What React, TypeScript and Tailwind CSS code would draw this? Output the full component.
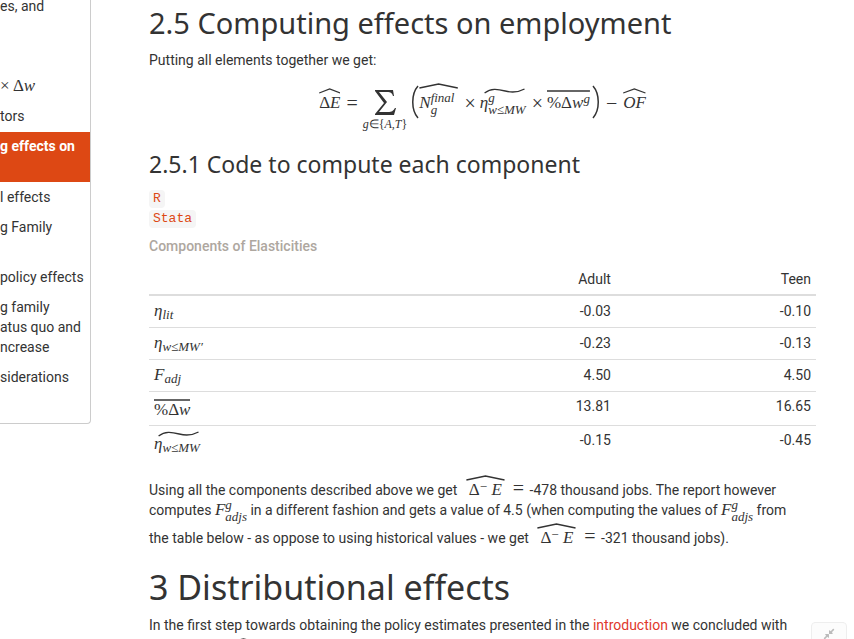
import type { ReactNode } from "react";
import { FaCompressAlt } from "react-icons/fa";

const math = "font-['Liberation_Serif',serif] text-[17px]";
const heading = "font-['Noto_Sans',sans-serif]";

function V({ children }: { children: ReactNode }) {
  return <i>{children}</i>;
}

function Op({ children }: { children: ReactNode }) {
  return <span className="text-[20px]">{children}</span>;
}

const accentShapes = {
  hat: "M1 5 L50 1 L99 5",
  tilde: "M10 5 C24 0 38 1 55 3 S85 4 97 1",
  bar: "M0 3 H100",
};

function Accent({ kind, children }: { kind: keyof typeof accentShapes; children: ReactNode }) {
  return (
    <span className="relative inline-block pt-2">
      <svg
        className="absolute left-0 top-[3px] h-[6px] w-full"
        viewBox="0 0 100 6"
        preserveAspectRatio="none"
        fill="none"
        stroke="#333"
        aria-hidden="true"
      >
        <path d={accentShapes[kind]} vectorEffect="non-scaling-stroke" strokeWidth="1.3" />
      </svg>
      {children}
    </span>
  );
}

function Sub({ children }: { children: ReactNode }) {
  return <sub className="bottom-[-3px] text-[13px] italic">{children}</sub>;
}

function Scripts({ sup, sub }: { sup: string; sub: string }) {
  return (
    <span className="-my-1 inline-flex flex-col align-middle text-[13px] italic leading-[12px]">
      <span>{sup}</span>
      <span>{sub}</span>
    </span>
  );
}

function Paren({ flip = false }: { flip?: boolean }) {
  return (
    <svg className="h-[34px] w-[8px]" viewBox="0 0 8 34" fill="none" stroke="#333" strokeWidth="1.5" aria-hidden="true">
      <path d={flip ? "M1 1 C8 9 8 25 1 33" : "M7 1 C0 9 0 25 7 33"} />
    </svg>
  );
}

function DeltaE() {
  return (
    <span className={`${math} ml-[5px] mr-[2px]`}>
      <Accent kind="hat">
        <span className="px-[3px]">
          Δ<sup className="top-[-4px] text-[13px]">−</sup> <V>E</V>
        </span>
      </Accent>
      <span className="ml-2"><Op>=</Op></span>
    </span>
  );
}

function Fadjs() {
  return (
    <span className={math}>
      <V>F</V>
      <Scripts sup="g" sub="adjs" />
    </span>
  );
}

const navItems: { lines: ReactNode[]; active?: boolean }[] = [
  { lines: [<span className={math}>× Δ<V>w</V></span>] },
  { lines: ["tors"] },
  { lines: ["g effects on", "\u00a0"], active: true },
  { lines: ["l effects"] },
  { lines: ["g Family", "\u00a0"] },
  { lines: ["policy effects"] },
  { lines: ["g family", "atus quo and", "ncrease"] },
  { lines: ["siderations", "\u00a0"] },
];

const rows: { label: ReactNode; adult: string; teen: string; tall?: boolean }[] = [
  { label: <><V>η</V><Sub>lit</Sub></>, adult: "-0.03", teen: "-0.10" },
  { label: <><V>η</V><Sub>w≤MW′</Sub></>, adult: "-0.23", teen: "-0.13" },
  { label: <><V>F</V><Sub>adj</Sub></>, adult: "4.50", teen: "4.50" },
  { label: <Accent kind="bar">%Δ<V>w</V></Accent>, adult: "13.81", teen: "16.65", tall: true },
  { label: <Accent kind="tilde"><V>η</V><Sub>w≤MW</Sub></Accent>, adult: "-0.15", teen: "-0.45", tall: true },
];

export default function App() {
  return (
    <div className="flex h-screen items-start overflow-hidden bg-white font-['Roboto',sans-serif] text-[14px] leading-5 text-[#333]">
      <nav className="w-[91px] shrink-0 overflow-hidden whitespace-nowrap rounded-br border-b border-r border-[#ccc] pb-[11px]">
        <a href="#values" className="-mt-1 block h-[75px]">
          es, and
        </a>
        {navItems.map((item, i) => (
          <a
            key={i}
            href="#section"
            className={item.active ? "mt-px block bg-[#dd4814] pb-[6px] pt-1 font-bold text-white" : "block py-[5px]"}
          >
            {item.lines.map((line, j) => (
              <span key={j} className="block h-5">
                {line}
              </span>
            ))}
          </a>
        ))}
      </nav>

      <main className="ml-[58px] mr-[38px] min-w-0 flex-1">
        <h2 className={`${heading} pt-1 text-[29px] leading-[38px]`}>2.5 Computing effects on employment</h2>
        <p className="mt-2">Putting all elements together we get:</p>

        <div className={`${math} mt-[10px] flex h-[56px] items-start justify-center whitespace-nowrap`}>
          <span className="mt-[5px]"><Accent kind="hat">Δ<V>E</V></Accent></span>
          <span className="ml-[6px] mt-[13px]"><Op>=</Op></span>
          <span className="ml-[5px] mt-[10px] flex flex-col items-center">
            <svg className="h-[26px] w-[22px]" viewBox="0 0 22 26" fill="#333" aria-hidden="true">
              <path d="M1 0 H19 L20 6 H19 C18 3 17 2 13 2 H5 L13 12 L5 22 H14 C18 22 19 21 21 18 H22 L20 25 H1 V24 L10 13 L1 1Z" />
            </svg>
            <span className="text-[12px] leading-[16px]"><V>g</V>∈{"{"}<V>A,T</V>{"}"}</span>
          </span>
          <span className="ml-1 mt-[5px]"><Paren /></span>
          <span><Accent kind="hat"><span className="block pr-1 pt-[5px]"><V>N</V><Scripts sup="final" sub="g" /></span></Accent></span>
          <span className="ml-[6px] mt-[13px]"><Op>×</Op></span>
          <span className="ml-1 mt-[5px]"><Accent kind="tilde"><V>η</V><Scripts sup="g" sub="w≤MW" /></Accent></span>
          <span className="ml-[6px] mt-[13px]"><Op>×</Op></span>
          <span className="ml-1 mt-[5px]">
            <Accent kind="bar">%Δ<V>w</V><sup className="top-[-5px] text-[13px] italic">g</sup></Accent>
          </span>
          <span className="ml-[2px] mt-[5px]"><Paren flip /></span>
          <span className="ml-[6px] mt-[13px]"><Op>−</Op></span>
          <span className="ml-[6px] mt-[5px]"><Accent kind="hat"><V>OF</V></Accent></span>
        </div>

        <h3 className={`${heading} mt-[13px] text-[23px] leading-[30px]`}>2.5.1 Code to compute each component</h3>
        <div className="mt-[10px] font-['Liberation_Mono',monospace] text-[13px] text-[#dd4814]">
          <div className="flex h-5 items-center"><code className="rounded bg-[#f5f5f5] px-1 font-[inherit] leading-[18px]">R</code></div>
          <div className="flex h-5 items-center"><code className="rounded bg-[#f5f5f5] px-1 font-[inherit] leading-[18px]">Stata</code></div>
        </div>

        <table className="mt-[7px] w-full table-fixed border-collapse">
          <caption className="pb-2 text-left font-medium text-[#aea79f]">Components of Elasticities</caption>
          <thead>
            <tr className="h-[31px] border-b-2 border-[#ddd]">
              <th className="w-[40%]" aria-label="Component" />
              <th className="w-[30%] px-[5px] py-0 text-right font-normal">Adult</th>
              <th className="w-[30%] px-[5px] py-0 text-right font-normal">Teen</th>
            </tr>
          </thead>
          <tbody>
            {rows.map((r, i) => (
              <tr key={i} className={`${r.tall ? "h-[34px] *:pb-1" : "h-8"} border-[#ddd] [&:not(:last-child)]:border-b`}>
                <th scope="row" className={`${math} px-[5px] pt-0 text-left font-normal leading-4`}>{r.label}</th>
                <td className="px-[5px] pt-0 text-right">{r.adult}</td>
                <td className="px-[5px] pt-0 text-right">{r.teen}</td>
              </tr>
            ))}
          </tbody>
        </table>

        <p className="mt-[13px] whitespace-nowrap">
          Using all the components described above we get <DeltaE /> -478 thousand jobs. The report however
          <br />
          computes <Fadjs /> in a different fashion and gets a value of 4.5 (when computing the values of <Fadjs /> from
          <br />
          the table below - as oppose to using historical values - we get <DeltaE /> -321 thousand jobs).
        </p>

        <h1 className={`${heading} mt-[17px] text-[34px] leading-[44px]`}>3 Distributional effects</h1>
        <p className="mt-[6px] whitespace-nowrap">
          In the first step towards obtaining the policy estimates presented in the{" "}
          <a href="#introduction" className="text-[#df382c]">introduction</a> we concluded with
          <br />
          <span className="pl-[70px]"><DeltaE /></span>
        </p>
      </main>

      <button
        type="button"
        aria-label="Collapse"
        className="fixed bottom-[-19px] right-[7px] flex h-9 w-9 items-center justify-center rounded border border-[#eee] bg-[#fcfcfc] pb-3 text-[#bbb]"
      >
        <FaCompressAlt size={12} />
      </button>
    </div>
  );
}
